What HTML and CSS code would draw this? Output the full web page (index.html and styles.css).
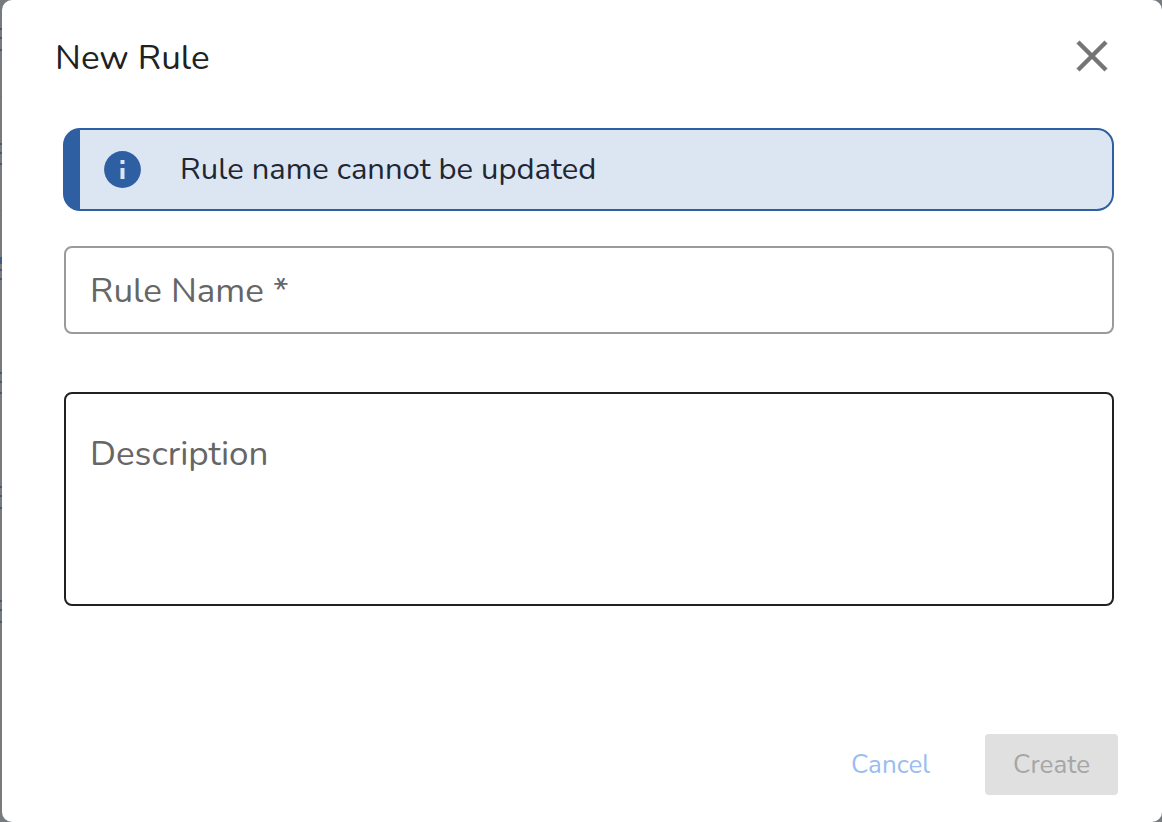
FILE: index.html
```html
<!DOCTYPE html>
<html lang="en">

<head>
    <meta charset="UTF-8">
    <meta name="viewport" content="width=device-width, initial-scale=1.0">
    <title>New Rule</title>
    <link rel="stylesheet" href="styles.css">
</head>

<body>
    <form class="dialog" role="dialog" aria-labelledby="dialogTitle">
        <header class="dialog-header">
            <h1 class="dialog-title" id="dialogTitle">New Rule</h1>
            <button class="close" type="button" aria-label="Close">
                <svg viewBox="0 0 32 32" width="32" height="32">
                    <path d="M2 2L30 30M30 2L2 30" stroke="currentColor" stroke-width="4.4" fill="none" />
                </svg>
            </button>
        </header>

        <div class="dialog-content">
            <div class="alert" role="status">
                <svg class="alert-icon" viewBox="0 0 37 37" width="37" height="37">
                    <circle cx="18.5" cy="18.5" r="18.4" fill="#2f5fa3" />
                    <path d="M16.5 9h4v4h-4zM16.5 17h4v11h-4z" fill="#dce6f2" />
                </svg>
                <span>Rule name cannot be updated</span>
            </div>

            <div class="field">
                <label for="ruleName">Rule Name *</label>
                <input type="text" id="ruleName" required>
            </div>

            <div class="field field-description">
                <label for="description">Description</label>
                <textarea id="description"></textarea>
            </div>
        </div>

        <footer class="dialog-actions">
            <button class="btn cancel" type="button">Cancel</button>
            <button class="btn create" type="submit" disabled>Create</button>
        </footer>
    </form>
</body>

</html>
```
FILE: styles.css
```css
* {
    box-sizing: border-box;
}

/* dimmed list rows behind the dialog */
body {
    margin: 0;
    padding-left: 2px;
    min-height: 100vh;
    display: flex;
    background-color: #777b7e;
    background-image: linear-gradient(
        transparent 0 28px, #4c566f 28px 30px,
        transparent 30px 37px, #4c566f 37px 39px,
        transparent 39px 49px, #4c566f 49px 51px,
        transparent 51px 96px, #707477 96px 97px,
        transparent 97px 143px, #4c566f 143px 145px,
        transparent 145px 152px, #4c566f 152px 154px,
        transparent 154px 163px, #4c566f 163px 165px,
        transparent 165px 210px, #707477 210px 211px,
        transparent 211px 257px, #3f5d86 257px 264px,
        transparent 264px 269px, #4c566f 269px 271px,
        transparent 271px 278px, #4c566f 278px 280px,
        transparent 280px 372px, #4c566f 372px 374px,
        transparent 374px 381px, #4c566f 381px 383px,
        transparent 383px 392px, #4c566f 392px 394px,
        transparent 394px 486px, #4c566f 486px 488px,
        transparent 488px 495px, #4c566f 495px 497px,
        transparent 497px 507px, #4c566f 507px 509px,
        transparent 509px 600px, #4c566f 600px 602px,
        transparent 602px 609px, #4c566f 609px 611px,
        transparent 611px 621px, #4c566f 621px 623px,
        transparent 623px
    );
    font-family: Nunito, "Noto Sans", sans-serif;
    color: #212121;
}

.dialog {
    flex: 1;
    display: flex;
    flex-direction: column;
    background-color: #fff;
    border-radius: 10px;
}

.dialog-header {
    display: flex;
    justify-content: space-between;
    align-items: center;
    height: 112px;
    padding: 0 54px 0 53px;
}

.dialog-title {
    margin: 0;
    padding-top: 2px;
    font-size: 35px;
    font-weight: 400;
}

.close {
    display: flex;
    padding: 0;
    border: none;
    background: none;
    color: #757575;
    cursor: pointer;
}

.dialog-content {
    flex: 1;
    display: flex;
    flex-direction: column;
    padding: 16px 48px 0 62px;
}

.alert {
    display: flex;
    align-items: center;
    gap: 39px;
    height: 83px;
    margin-left: -1px;
    margin-bottom: 35px;
    padding-left: 24px;
    border: 2px solid #2f5fa3;
    border-left-width: 17px;
    border-radius: 17px;
    background-color: #dce6f2;
    color: #1f2733;
    font-size: 31px;
    line-height: 40px;
}

.alert span {
    padding-bottom: 2px;
}

.field {
    position: relative;
    display: flex;
    margin-bottom: 58px;
}

.field label {
    position: absolute;
    top: 21px;
    left: 26px;
    color: #666;
    font-size: 35px;
    line-height: 48px;
}

.field input,
.field textarea {
    width: 100%;
    height: 88px;
    padding: 0 26px;
    border: 2px solid #9a9a9a;
    border-radius: 8px;
    background-color: transparent;
    color: #212121;
    font-family: inherit;
    font-size: 35px;
}

.field-description label {
    top: 38px;
}

.field textarea {
    height: 214px;
    padding-top: 37px;
    border-color: #212121;
    resize: none;
}

.dialog-actions {
    display: flex;
    justify-content: flex-end;
    gap: 28px;
    padding: 0 44px 27px;
}

.btn {
    min-width: 133px;
    height: 61px;
    padding: 0 26px;
    border: none;
    border-radius: 4px;
    font-family: inherit;
    font-size: 26px;
}

.cancel {
    background: none;
    color: #99bdf0;
    cursor: pointer;
}

.create {
    background-color: #e0e0e0;
    color: #a6a6a6;
}
```
